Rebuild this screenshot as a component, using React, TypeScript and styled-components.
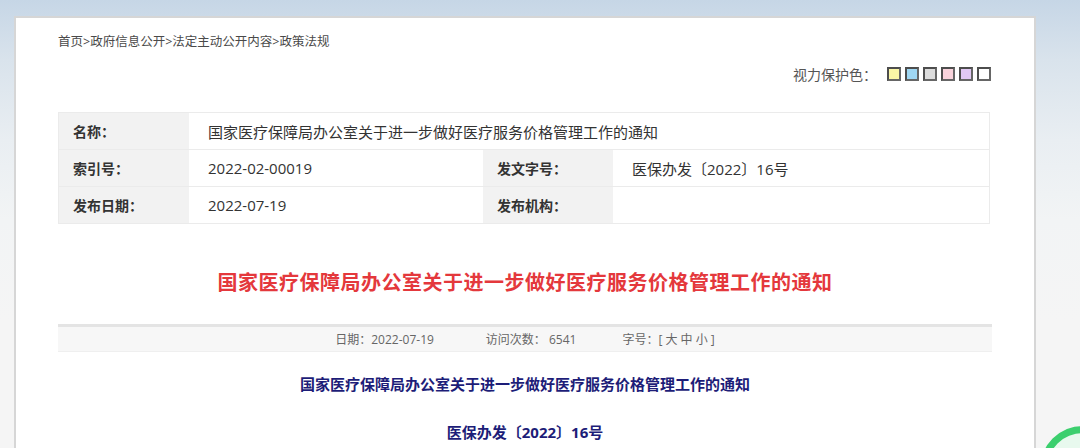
import React from 'react';
import styled, { createGlobalStyle } from 'styled-components';

const GlobalStyle = createGlobalStyle`
  html, body {
    margin: 0;
    padding: 0;
  }
  body {
    font-family: "Open Sans", "Noto Sans CJK SC", sans-serif;
    background: #f5f5f5;
  }
`;

const Page = styled.div`
  width: 1080px;
  height: 448px;
  overflow: hidden;
  box-sizing: border-box;
  padding: 16px 0 0 14px;
  background: linear-gradient(
    180deg,
    #c6d6e6 0px,
    #d9e3ec 60px,
    #e9eef2 140px,
    #f2f4f5 220px,
    #f5f5f5 320px
  );
`;

const Panel = styled.div`
  width: 1022px;
  min-height: 500px;
  box-sizing: border-box;
  background: #fff;
  border: 2px solid #d6d6d6;
  border-bottom: none;
  padding: 14px 42px 0 42px;
`;

const Breadcrumb = styled.div`
  font-size: 12.5px;
  line-height: 20px;
  color: #4a4a4a;
`;

const ProtectRow = styled.div`
  display: flex;
  justify-content: flex-end;
  align-items: center;
  margin-top: 12px;
  height: 20px;
`;

const ProtectLabel = styled.span`
  font-size: 14px;
  color: #555;
  margin-right: 10px;
`;

const Swatches = styled.div`
  display: flex;
  gap: 4px;
  margin-right: 1px;
`;

const Swatch = styled.span<{ $color: string }>`
  display: block;
  width: 10px;
  height: 10px;
  background: ${(p) => p.$color};
  border: 2px solid #4d4d4d;
  border-right-color: #666;
  border-bottom-color: #666;
`;

const InfoTable = styled.div`
  margin-top: 28px;
  width: 930px;
  display: grid;
  grid-template-columns: 130px 294px 130px 1fr;
  border: 1px solid #ebebeb;
  border-bottom: none;
`;

const Cell = styled.div<{ $label?: boolean; $span?: number }>`
  height: 37px;
  display: flex;
  align-items: center;
  box-sizing: border-box;
  border-bottom: 1px solid #ebebeb;
  grid-column: span ${(p) => p.$span ?? 1};
  background: ${(p) => (p.$label ? '#f2f2f2' : '#fff')};
  padding-left: ${(p) => (p.$label ? '14px' : '19px')};
  font-size: ${(p) => (p.$label ? '14px' : '15px')};
  font-weight: ${(p) => (p.$label ? 700 : 400)};
  color: #333;
`;

const RedTitle = styled.h1`
  margin: 44px 0 0;
  width: 934px;
  text-align: center;
  font-size: 20px;
  letter-spacing: 0.5px;
  line-height: 30px;
  font-weight: 700;
  color: #e4383c;
`;

const MetaBar = styled.div`
  margin-top: 26px;
  width: 934px;
  height: 28px;
  box-sizing: border-box;
  border-top: 3px solid #e4e4e4;
  border-bottom: 1px solid #efefef;
  background: #f7f7f7;
  display: flex;
  justify-content: center;
  align-items: center;
  font-size: 12px;
  color: #666;
`;

const MetaItem = styled.span<{ $gap?: number }>`
  margin-right: ${(p) => p.$gap ?? 0}px;
  white-space: pre;
`;

const DocTitle = styled.h2`
  margin: 20px 0 0;
  width: 934px;
  text-align: center;
  font-size: 15px;
  line-height: 24px;
  font-weight: 700;
  color: #1d1d78;
`;

const DocNumber = styled(DocTitle)`
  margin-top: 24px;
`;

const FloatBadge = styled.div`
  position: fixed;
  left: 1040px;
  top: 426px;
  width: 86px;
  height: 86px;
  box-sizing: border-box;
  border-radius: 50%;
  border: 7px solid #3ccf6e;
  background: #e8f9ee;
`;

const swatchColors = ['#faf6a6', '#9fd7f3', '#dcdcdc', '#f9d3dc', '#e1c8f4', '#ffffff'];

const App: React.FC = () => {
  return (
    <Page>
      <GlobalStyle />
      <Panel>
        <Breadcrumb>首页&gt;政府信息公开&gt;法定主动公开内容&gt;政策法规</Breadcrumb>
        <ProtectRow>
          <ProtectLabel>视力保护色：</ProtectLabel>
          <Swatches>
            {swatchColors.map((c) => (
              <Swatch key={c} $color={c} />
            ))}
          </Swatches>
        </ProtectRow>

        <InfoTable>
          <Cell $label>名称：</Cell>
          <Cell $span={3}>国家医疗保障局办公室关于进一步做好医疗服务价格管理工作的通知</Cell>
          <Cell $label>索引号：</Cell>
          <Cell>2022-02-00019</Cell>
          <Cell $label>发文字号：</Cell>
          <Cell>医保办发〔2022〕16号</Cell>
          <Cell $label>发布日期：</Cell>
          <Cell>2022-07-19</Cell>
          <Cell $label>发布机构：</Cell>
          <Cell />
        </InfoTable>

        <RedTitle>国家医疗保障局办公室关于进一步做好医疗服务价格管理工作的通知</RedTitle>

        <MetaBar>
          <MetaItem $gap={52}>日期：2022-07-19</MetaItem>
          <MetaItem $gap={46}>访问次数： 6541</MetaItem>
          <MetaItem>字号：[ 大 中 小 ]</MetaItem>
        </MetaBar>

        <DocTitle>国家医疗保障局办公室关于进一步做好医疗服务价格管理工作的通知</DocTitle>
        <DocNumber>医保办发〔2022〕16号</DocNumber>
      </Panel>
      <FloatBadge />
    </Page>
  );
};

export default App;
